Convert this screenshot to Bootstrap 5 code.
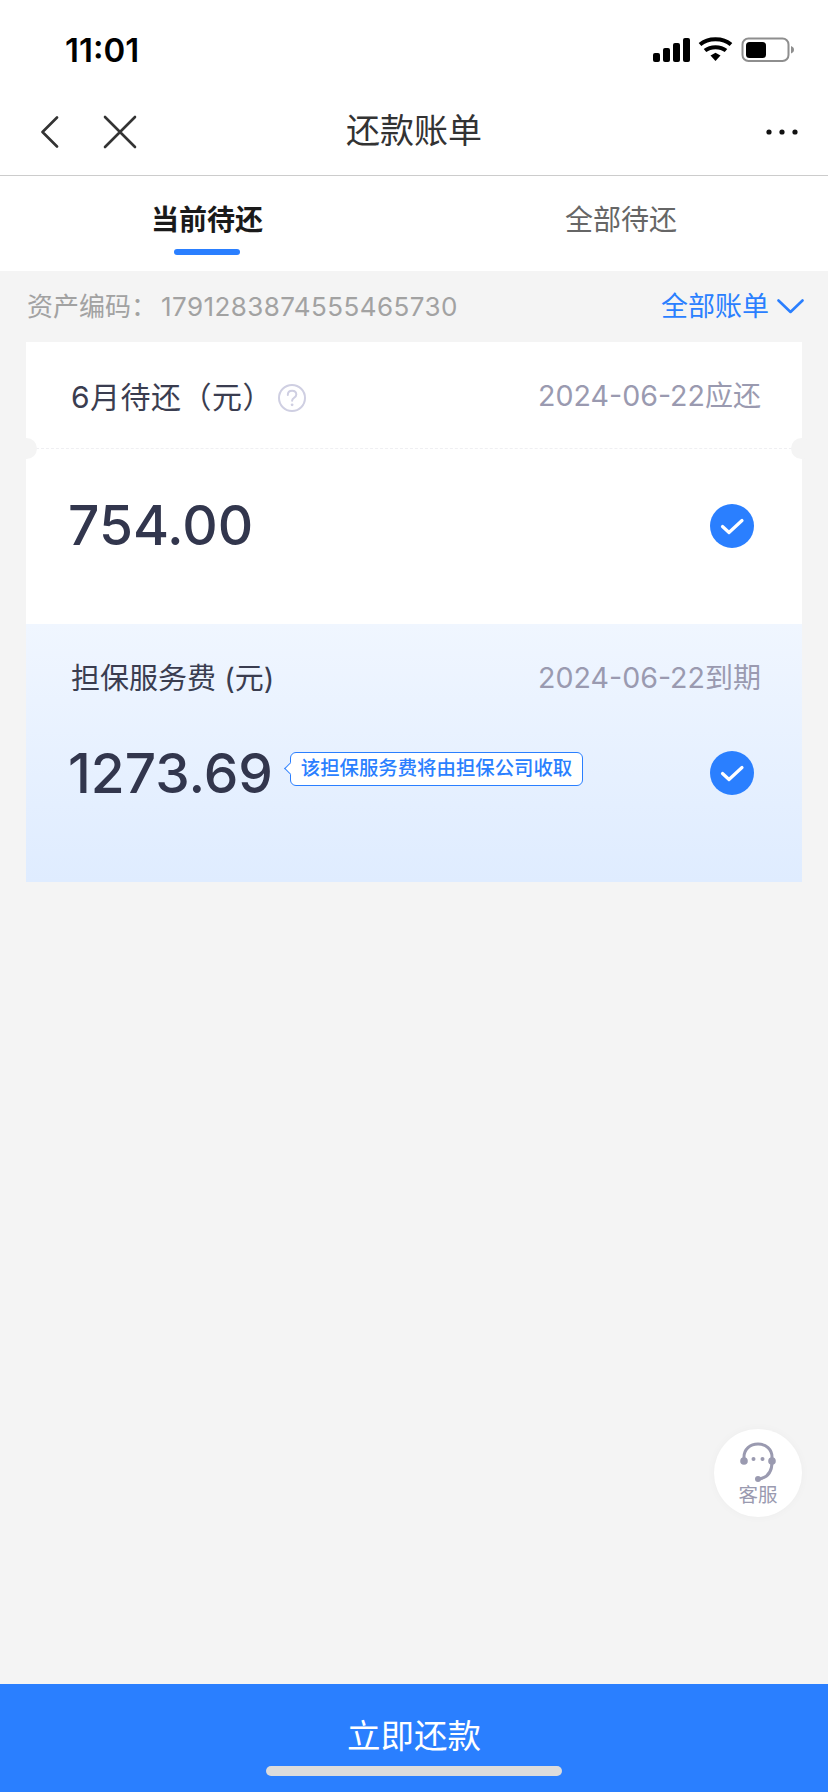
<!DOCTYPE html>
<html lang="zh-CN">
<head>
<meta charset="utf-8">
<title>还款账单</title>
<link href="https://cdn.jsdelivr.net/npm/bootstrap@5.3.0/dist/css/bootstrap.min.css" rel="stylesheet">
<style>
html,body{height:1792px;}
body{width:828px;background:#f4f4f4;font-family:Inter,"Noto Sans CJK SC",sans-serif;position:relative;overflow:hidden;}
.app-page{height:1792px;}
.status-bar{height:88px;background:#fff;padding:10px 34px 0 65px;}
.status-time{font-size:33px;font-weight:600;color:#000;line-height:1;margin-top:2px;}
.status-icons{margin-top:2px;}
.title-bar{height:88px;background:#fff;border-bottom:1.5px solid #ccc;padding:0 30px 0 40px;position:relative;}
.title-text{position:absolute;left:0;right:0;top:0;bottom:0;display:flex;align-items:center;justify-content:center;font-size:34px;color:#333;line-height:1;padding-bottom:1px;}
.tab-strip{height:95px;background:#fff;}
.tab-cell{height:95px;padding:0;text-align:center;position:relative;font-size:28px;color:#666;line-height:1;padding-top:30px;}
.tab-cell.on{color:#1a1a1a;font-weight:700;}
.tab-line{position:absolute;left:50%;margin-left:-33px;bottom:16px;width:66px;height:6px;border-radius:3px;background:#2a7fff;}
.code-row{height:71px;padding:0 24px 0 27px;font-size:26px;color:#a2a2a2;line-height:1;}
.code-digits{font-size:26px;letter-spacing:.42px;margin-left:4px;}
.all-bills{color:#2a7fff;font-size:27px;}
.bill-card{margin:0 26px;background:#fff;}
.bill-head{height:107px;padding:3px 41px 0 45px;position:relative;border-bottom:1px dashed #efeff2;font-size:30px;letter-spacing:.5px;color:#3a3d50;line-height:1;}
.bill-date{color:#9a9ab0;font-size:28.6px;letter-spacing:0;}
.bill-date-cn{font-size:28px;}
.notch{position:absolute;bottom:-11px;width:21px;height:21px;border-radius:50%;background:#f4f4f4;}
.notch-l{left:-10px;}
.notch-r{right:-10px;}
.bill-body{height:175px;padding:0 48px 22px 42px;}
.bill-amount{font-size:55px;font-weight:500;color:#32364d;line-height:1;}
.fee-box{height:258px;background:linear-gradient(180deg,#f0f6ff,#dfecff);}
.fee-head{height:108px;padding:0 41px 0 45px;font-size:29px;color:#3a3d50;line-height:1;}
.fee-body{height:82px;padding:0 48px 0 42px;}
.fee-tip{position:relative;margin-left:17px;height:34px;width:293px;background:#fff;border:1.5px solid #2a7fff;border-radius:6px;color:#2a7fff;font-size:19.4px;font-weight:500;line-height:1;white-space:nowrap;margin-top:-8px;}
.fee-tip::before{content:"";position:absolute;left:-5px;top:11px;width:9px;height:9px;background:#fff;border-left:1.5px solid #2a7fff;border-bottom:1.5px solid #2a7fff;transform:rotate(45deg);}
.help-float{position:absolute;left:714px;top:1429px;width:88px;height:88px;border-radius:50%;background:#fff;box-shadow:0 0 10px rgba(0,0,0,.03);color:#9a9ab0;font-size:19.5px;line-height:1;padding-top:13px;}
.pay-bar{position:absolute;left:0;right:0;bottom:0;height:108px;background:#2a7fff;padding-top:32px;}
.pay-btn{color:#fff;font-size:33.5px;line-height:1.2;padding:0;border:0;border-radius:0;background:transparent;}
.home-bar{position:absolute;left:266px;bottom:16px;width:296px;height:10px;border-radius:5px;background:#dcdcdc;}
svg{display:block;}
</style>
</head>
<body>
<div class="app-page d-flex flex-column">
  <div class="status-bar d-flex justify-content-between align-items-center">
    <div class="status-time">11:01</div>
    <svg class="status-icons" width="142" height="26" viewBox="0 0 142 26">
      <rect x="1" y="16" width="7" height="9" rx="2" fill="#000"/>
      <rect x="11" y="11" width="7" height="14" rx="2" fill="#000"/>
      <rect x="21" y="6" width="7" height="19" rx="2" fill="#000"/>
      <rect x="31" y="1" width="7" height="24" rx="2" fill="#000"/>
      <path d="M48 7.500C56 0.500 71 0.500 79 7.500" fill="none" stroke="#000" stroke-width="4"/>
      <path d="M53 13.500C58.500 9 68.500 9 74 13.500" fill="none" stroke="#000" stroke-width="4"/>
      <path d="M58.500 18.500 63.500 15.800 68.500 18.500 63.500 24Z" fill="#000"/>
      <rect x="90.500" y="1.500" width="46" height="22.500" rx="6" fill="none" stroke="#8e8e8e" stroke-width="2"/>
      <rect x="94" y="5" width="20" height="16" rx="3.500" fill="#000"/>
      <path d="M139 9c2 .8 3 2 3 3.700s-1 3-3 3.700z" fill="#8e8e8e"/>
    </svg>
  </div>

  <div class="title-bar d-flex justify-content-between align-items-center">
    <div class="title-text">还款账单</div>
    <div class="d-flex align-items-center gap-5 position-relative">
      <svg width="19" height="32" viewBox="0 0 19 32"><path d="M17 1.500 2.500 16 17 30.500" fill="none" stroke="#333" stroke-width="2.600" stroke-linecap="round" stroke-linejoin="round"/></svg>
      <svg width="34" height="34" viewBox="0 0 34 34" style="margin-left:-4px"><path d="M2 2 32 32M32 2 2 32" fill="none" stroke="#333" stroke-width="2.600" stroke-linecap="round"/></svg>
    </div>
    <svg class="position-relative" width="32" height="6" viewBox="0 0 32 6"><circle cx="3" cy="3" r="2.600" fill="#111"/><circle cx="16" cy="3" r="2.600" fill="#111"/><circle cx="29" cy="3" r="2.600" fill="#111"/></svg>
  </div>

  <div class="tab-strip row g-0">
    <div class="col-6"><div class="tab-cell on">当前待还<span class="tab-line"></span></div></div>
    <div class="col-6"><div class="tab-cell">全部待还</div></div>
  </div>

  <div class="code-row d-flex justify-content-between align-items-center">
    <div>资产编码：<span class="code-digits">1791283874555465730</span></div>
    <div class="all-bills d-flex align-items-center gap-2">全部账单
      <svg width="27" height="15" viewBox="0 0 27 15"><path d="M1.500 1.500 13.500 13 25.500 1.500" fill="none" stroke="#2a7fff" stroke-width="2.600" stroke-linecap="round" stroke-linejoin="round"/></svg>
    </div>
  </div>

  <div class="bill-card">
    <div class="bill-head d-flex justify-content-between align-items-center">
      <div class="d-flex align-items-center">6月待还（元）
        <svg class="ms-1" width="30" height="30" viewBox="0 0 30 30" style="margin-top:2px"><circle cx="15" cy="15" r="13" fill="none" stroke="#cfcfe2" stroke-width="2"/><path d="M10.800 12c0-2.600 1.900-4.200 4.300-4.200s4.200 1.500 4.200 3.700c0 3.300-4.200 3.300-4.200 6.300" fill="none" stroke="#cfcfe2" stroke-width="2" stroke-linecap="round"/><circle cx="15.100" cy="21.800" r="1.400" fill="#cfcfe2"/></svg>
      </div>
      <div class="bill-date">2024-06-22<span class="bill-date-cn">应还</span></div>
      <span class="notch notch-l"></span><span class="notch notch-r"></span>
    </div>
    <div class="bill-body d-flex justify-content-between align-items-center">
      <div class="bill-amount">754.00</div>
      <svg width="44" height="44" viewBox="0 0 44 44"><circle cx="22" cy="22" r="22" fill="#2a7fff"/><path d="M12.500 22.500 19 28.500 32 16.500" fill="none" stroke="#fff" stroke-width="3.200" stroke-linecap="round" stroke-linejoin="round"/></svg>
    </div>
    <div class="fee-box">
      <div class="fee-head d-flex justify-content-between align-items-center">
        <div>担保服务费 (元)</div>
        <div class="bill-date">2024-06-22<span class="bill-date-cn">到期</span></div>
      </div>
      <div class="fee-body d-flex align-items-center">
        <div class="bill-amount">1273.69</div>
        <div class="fee-tip d-flex align-items-center justify-content-center">该担保服务费将由担保公司收取</div>
        <svg class="ms-auto" width="44" height="44" viewBox="0 0 44 44"><circle cx="22" cy="22" r="22" fill="#2a7fff"/><path d="M12.500 22.500 19 28.500 32 16.500" fill="none" stroke="#fff" stroke-width="3.200" stroke-linecap="round" stroke-linejoin="round"/></svg>
      </div>
    </div>
  </div>
</div>

<div class="help-float d-flex flex-column align-items-center">
  <svg width="36" height="40" viewBox="0 0 36 40">
    <path d="M4 19V15C4 7.500 10 2 18 2s14 5.500 14 13v4" fill="none" stroke="#9a9ab0" stroke-width="3"/>
    <path d="M32 20c0 9-4 15.500-13 17" fill="none" stroke="#9a9ab0" stroke-width="3"/>
    <circle cx="4" cy="19" r="3.800" fill="#9a9ab0"/><circle cx="32" cy="19" r="3.800" fill="#9a9ab0"/>
    <circle cx="18" cy="37" r="3" fill="#9a9ab0"/>
    <circle cx="13.500" cy="17" r="2" fill="#9a9ab0"/><circle cx="22.500" cy="17" r="2" fill="#9a9ab0"/>
  </svg>
  <div class="mt-1">客服</div>
</div>

<div class="pay-bar text-center">
  <button type="button" class="btn pay-btn">立即还款</button>
  <div class="home-bar"></div>
</div>
<script src="https://cdn.jsdelivr.net/npm/bootstrap@5.3.0/dist/js/bootstrap.bundle.min.js"></script>
</body>
</html>
